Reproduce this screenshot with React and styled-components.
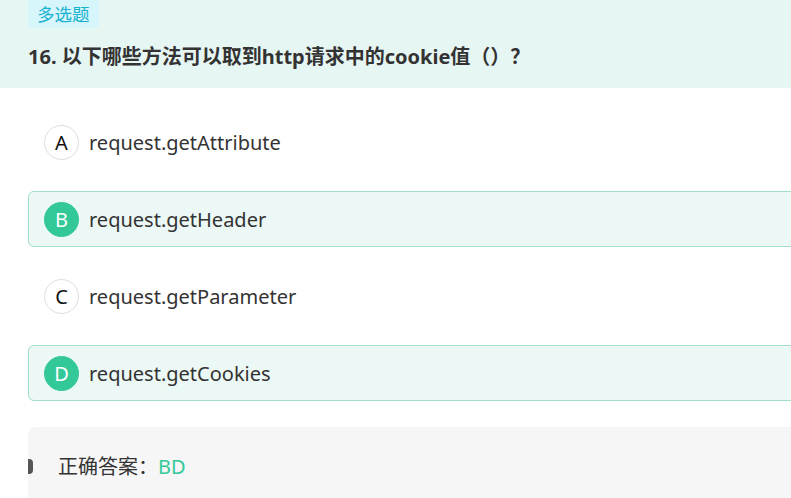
import styled, { createGlobalStyle } from 'styled-components';

const GlobalStyle = createGlobalStyle`
  body {
    margin: 0;
    background: #fff;
    font-family: "Noto Sans", "Noto Sans CJK SC", sans-serif;
    color: #333;
  }
`;

const options = [
  { key: 'A', text: 'request.getAttribute', picked: false },
  { key: 'B', text: 'request.getHeader', picked: true },
  { key: 'C', text: 'request.getParameter', picked: false },
  { key: 'D', text: 'request.getCookies', picked: true },
];

function App() {
  return (
    <>
      <GlobalStyle />
      <Page>
        <Header>
          <Tag>多选题</Tag>
          <Title>16. 以下哪些方法可以取到http请求中的cookie值（）？</Title>
        </Header>
        <OptionList>
          {options.map((o) => (
            <Option key={o.key} $picked={o.picked}>
              <Letter $picked={o.picked}>{o.key}</Letter>
              <OptionText>{o.text}</OptionText>
            </Option>
          ))}
        </OptionList>
        <Answer>
          正确答案：<AnswerValue>BD</AnswerValue>
        </Answer>
      </Page>
    </>
  );
}

export default App;

const Page = styled.div`
  width: 791px;
  height: 498px;
  overflow: hidden;
`;

const Header = styled.div`
  background: #e6f6f3;
  height: 88px;
  padding: 0 0 0 28px;
  box-sizing: border-box;
`;

const Tag = styled.div`
  display: inline-block;
  background: #d6f6fb;
  color: #19b2d1;
  font-size: 17.5px;
  line-height: 28px;
  padding: 0 9px;
  border-radius: 0 0 5px 5px;
`;

const Title = styled.div`
  margin-top: 14px;
  font-size: 20px;
  font-weight: bold;
  color: #333;
  line-height: 30px;
`;

const OptionList = styled.div`
  display: flex;
  flex-direction: column;
  gap: 21px;
  padding: 26px 0 0 28px;
`;

const Option = styled.div`
  display: flex;
  align-items: center;
  gap: 10px;
  height: 56px;
  box-sizing: border-box;
  padding-left: 15px;
  width: 800px;
  border: 1px solid ${(p) => (p.$picked ? '#9fe0c6' : 'transparent')};
  background: ${(p) => (p.$picked ? '#ebf8f5' : 'transparent')};
  border-radius: 6px;
`;

const Letter = styled.div`
  width: 35px;
  height: 35px;
  border-radius: 50%;
  box-sizing: border-box;
  display: flex;
  align-items: center;
  justify-content: center;
  font-size: 20px;
  color: ${(p) => (p.$picked ? '#fff' : '#111')};
  background: ${(p) => (p.$picked ? '#33c898' : '#fff')};
  border: 1px solid ${(p) => (p.$picked ? '#33c898' : '#dedede')};
`;

const OptionText = styled.span`
  font-size: 20px;
  color: #333;
`;

const Answer = styled.div`
  position: relative;
  margin: 26px 0 0 28px;
  width: 800px;
  height: 90px;
  background: #f6f6f6;
  border-radius: 7px;
  padding: 25px 0 0 30px;
  box-sizing: border-box;
  font-size: 20px;
  color: #333;
  line-height: 30px;

  &::before {
    content: '';
    position: absolute;
    left: 0;
    top: 32px;
    width: 5px;
    height: 15px;
    background: #555;
    border-radius: 0 4px 4px 0;
  }
`;

const AnswerValue = styled.span`
  color: #33c898;
`;
